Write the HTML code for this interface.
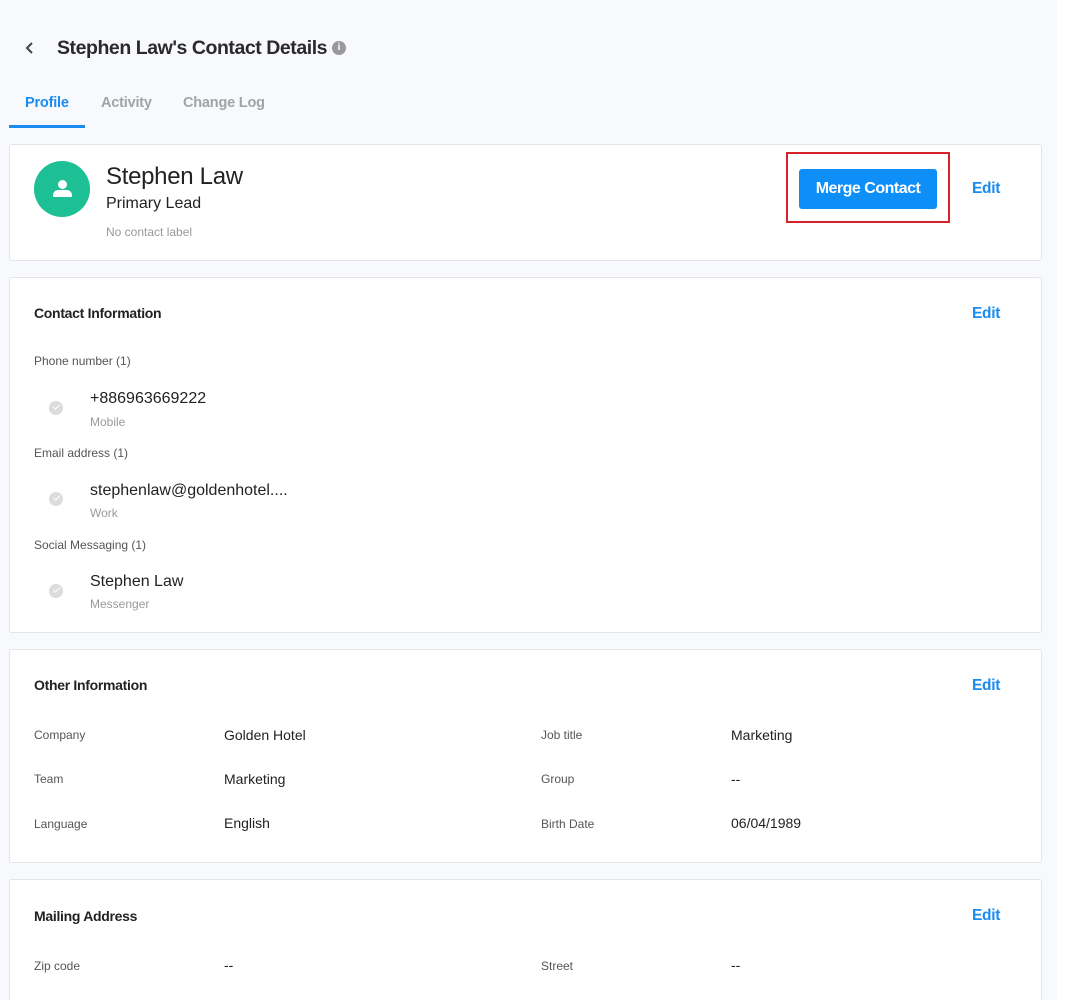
<!DOCTYPE html>
<html><head><meta charset="utf-8"><style>
*{margin:0;padding:0;box-sizing:border-box}
html,body{width:1072px;height:1000px;overflow:hidden}
body{background:#fff;font-family:"Liberation Sans",Arial,sans-serif;position:relative;color:#222}
.bg{position:absolute;left:0;top:0;width:1057px;height:1000px;background:#f8f9fd}
.a{position:absolute;white-space:nowrap}
.card{position:absolute;left:9px;width:1033px;background:#fff;border:1px solid #e3e5ea;border-radius:3px}
.h{font-size:14px;font-weight:bold;color:#222;letter-spacing:-.3px}
.edit{font-size:15.5px;color:#1a8cf0;font-weight:bold;letter-spacing:-.3px}
.lab{font-size:12px;color:#555}
.val{font-size:14px;color:#222}
.sub{font-size:12px;color:#999}
.big{font-size:16px;color:#222}
.chk{position:absolute;width:14px;height:14px;border-radius:50%;background:#dcdcdc}
.chk:after{content:"";position:absolute;left:4px;top:3px;width:6px;height:3px;border-left:1.5px solid #fff;border-bottom:1.5px solid #fff;transform:rotate(-45deg)}
</style></head><body>
<div class="bg"></div>
<svg class="a" style="left:24px;top:41px" width="12" height="14" viewBox="0 0 12 14"><path d="M8 2 L3 7 L8 12" stroke="#444" stroke-width="2" fill="none"/></svg>
<div class="a" style="left:57px;top:37px;font-size:19.5px;font-weight:bold;color:#2a2a2a;letter-spacing:-.45px">Stephen Law's Contact Details</div>
<div class="a" style="left:332px;top:41px;width:14px;height:14px;border-radius:50%;background:#999;color:#fff;font-size:10px;font-weight:bold;text-align:center;line-height:14px">i</div>
<div class="a" style="left:25px;top:95px;font-size:14.5px;font-weight:bold;color:#1a8cf0;letter-spacing:-.2px">Profile</div>
<div class="a" style="left:101px;top:95px;font-size:14.5px;font-weight:bold;color:#a0a3a8;letter-spacing:-.2px">Activity</div>
<div class="a" style="left:183px;top:95px;font-size:14.5px;font-weight:bold;color:#a0a3a8;letter-spacing:-.2px">Change Log</div>
<div class="a" style="left:9px;top:125px;width:76px;height:3px;background:#1a8cf0"></div>

<div class="card" style="top:144px;height:117px"></div>
<div class="a" style="left:34px;top:161px;width:56px;height:56px;border-radius:50%;background:#1dbf94"></div>
<div class="a" style="left:58px;top:180px;width:9px;height:9px;border-radius:50%;background:#fff"></div>
<div class="a" style="left:53px;top:190px;width:19px;height:7px;border-radius:5px 5px 1px 1px;background:#fff"></div>
<div class="a" style="left:106px;top:163px;font-size:24px;color:#222;letter-spacing:-.3px">Stephen Law</div>
<div class="a" style="left:106px;top:195px;font-size:16px;color:#222">Primary Lead</div>
<div class="a" style="left:106px;top:225px;font-size:12px;color:#999">No contact label</div>
<div class="a" style="left:786px;top:152px;width:164px;height:71px;border:2px solid #d8222a"></div>
<div class="a" style="left:799px;top:169px;width:138px;height:40px;background:#0d8ff7;border-radius:3px;color:#fff;font-size:16px;font-weight:bold;text-align:center;line-height:40px;letter-spacing:-.5px">Merge Contact</div>
<div class="a edit" style="left:972px;top:180px">Edit</div>

<div class="card" style="top:277px;height:356px"></div>
<div class="a h" style="left:34px;top:305px">Contact Information</div>
<div class="a edit" style="left:972px;top:305px">Edit</div>
<div class="a lab" style="left:34px;top:354px">Phone number (1)</div>
<div class="chk" style="left:49px;top:401px"></div>
<div class="a big" style="left:90px;top:390px">+886963669222</div>
<div class="a sub" style="left:90px;top:415px">Mobile</div>
<div class="a lab" style="left:34px;top:446px">Email address (1)</div>
<div class="chk" style="left:49px;top:492px"></div>
<div class="a big" style="left:90px;top:482px">stephenlaw@goldenhotel....</div>
<div class="a sub" style="left:90px;top:506px">Work</div>
<div class="a lab" style="left:34px;top:538px">Social Messaging (1)</div>
<div class="chk" style="left:49px;top:584px"></div>
<div class="a big" style="left:90px;top:573px">Stephen Law</div>
<div class="a sub" style="left:90px;top:597px">Messenger</div>

<div class="card" style="top:649px;height:214px"></div>
<div class="a h" style="left:34px;top:677px">Other Information</div>
<div class="a edit" style="left:972px;top:677px">Edit</div>
<div class="a lab" style="left:34px;top:728px">Company</div><div class="a val" style="left:224px;top:727px">Golden Hotel</div>
<div class="a lab" style="left:541px;top:728px">Job title</div><div class="a val" style="left:731px;top:727px">Marketing</div>
<div class="a lab" style="left:34px;top:772px">Team</div><div class="a val" style="left:224px;top:771px">Marketing</div>
<div class="a lab" style="left:541px;top:772px">Group</div><div class="a val" style="left:731px;top:771px">--</div>
<div class="a lab" style="left:34px;top:817px">Language</div><div class="a val" style="left:224px;top:815px">English</div>
<div class="a lab" style="left:541px;top:817px">Birth Date</div><div class="a val" style="left:731px;top:815px">06/04/1989</div>

<div class="card" style="top:879px;height:140px"></div>
<div class="a h" style="left:34px;top:908px">Mailing Address</div>
<div class="a edit" style="left:972px;top:907px">Edit</div>
<div class="a lab" style="left:34px;top:959px">Zip code</div><div class="a val" style="left:224px;top:957px">--</div>
<div class="a lab" style="left:541px;top:959px">Street</div><div class="a val" style="left:731px;top:957px">--</div>
</body></html>
